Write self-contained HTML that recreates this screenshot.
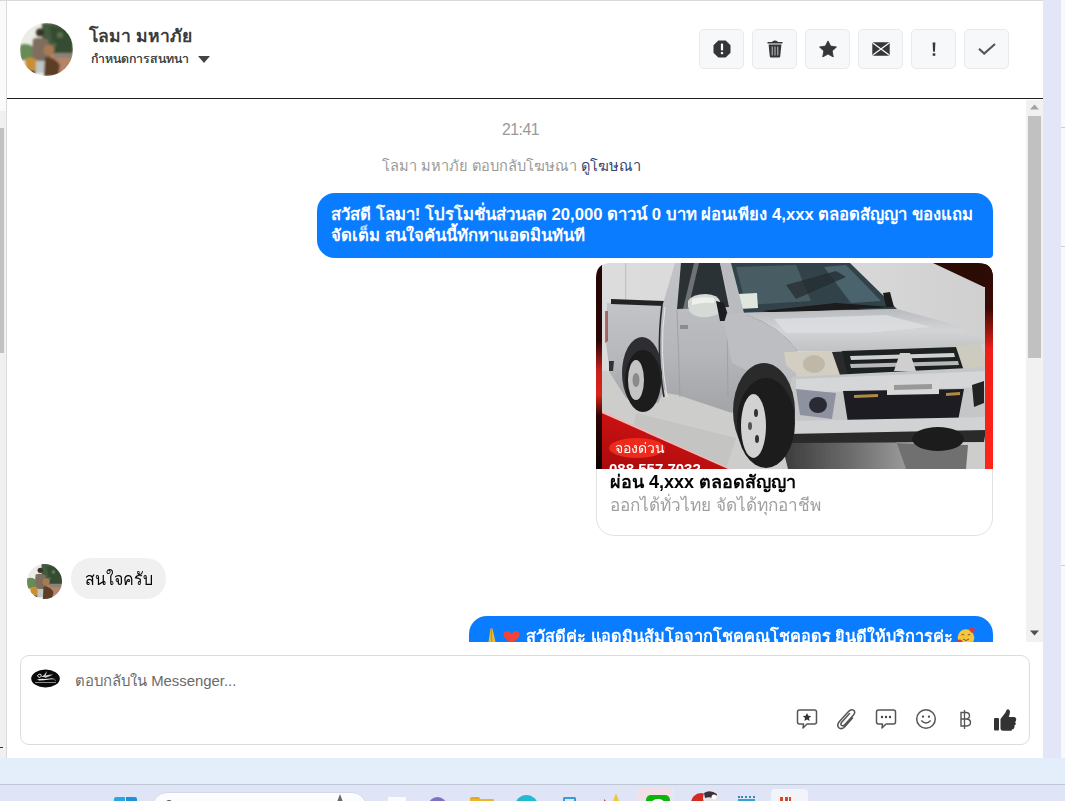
<!DOCTYPE html>
<html><head><meta charset="utf-8">
<style>
*{box-sizing:border-box;margin:0;padding:0}
html,body{width:1065px;height:801px;overflow:hidden;background:#fff;font-family:"Liberation Sans",sans-serif}
.abs{position:absolute}
#leftstrip{left:0;top:0;width:6px;height:758px;background:#f0f0f0}
#leftstrip .top{position:absolute;left:0;top:0;width:6px;height:111px;background:#fafafa}
#leftstrip .thumb{position:absolute;left:0;top:128px;width:4px;height:225px;background:#c1c1c1}
#leftline{left:6px;top:0;width:1px;height:758px;background:#dadada}
#topline{left:0;top:0;width:1043px;height:1px;background:#d9d9d9}
#panel{left:7px;top:1px;width:1036px;height:757px;background:#fff}
#rightstrip{left:1043px;top:0;width:18px;height:758px;background:#e3e6f7}
#rightedge{left:1061px;top:0;width:4px;height:758px;background:#f8f9fc}
#band{left:0;top:758px;width:1065px;height:26px;background:#e4edfa}
#tbline{left:0;top:784px;width:1065px;height:1px;background:#bdc7d3}
#taskbar{left:0;top:785px;width:1065px;height:16px;background:#dfe5f6}
.avatar{border-radius:50%;overflow:hidden}
#hdrline{left:7px;top:98px;width:1036px;height:1px;background:#1e1e1e}
.btn{top:29px;width:45px;height:40px;background:#f7f8fa;border:1px solid #e9eaec;border-radius:5px}
.btn svg{position:absolute;left:50%;top:50%;transform:translate(-50%,-50%)}
#name{left:89px;top:24px;font-size:17.5px;font-weight:bold;color:#3a3a3a;white-space:nowrap;line-height:24px}
#sub{left:91px;top:50px;font-size:12.3px;color:#454545;text-shadow:0.4px 0 0 #454545;white-space:nowrap;line-height:18px}
#vtrack{left:1026px;top:100px;width:17px;height:542px;background:#f1f1f1}
#vthumb{left:1028px;top:116px;width:13px;height:242px;background:#c1c1c1}
#time{left:502px;top:121px;font-size:15.8px;letter-spacing:-0.5px;color:#9a9a9a;line-height:18px;white-space:nowrap}
#reply{left:382px;top:157px;font-size:14.6px;color:#9a9a9a;line-height:18px;white-space:nowrap}
#reply b{color:#34466e;font-weight:normal}
#bub1{left:317px;top:193px;width:676px;height:65px;background:#0a7cff;border-radius:18px 18px 4px 18px}
.btxt{color:#fff;font-weight:bold;font-size:16.7px;white-space:nowrap;line-height:21px}
#card{left:596px;top:263px;width:397px;height:273px;border:1px solid #e2e2e2;border-radius:18px 16px 18px 18px;overflow:hidden;background:#fff}
#cardtitle{left:610px;top:471px;font-size:18px;font-weight:bold;color:#050505;line-height:22px;white-space:nowrap}
#cardsub{left:610px;top:494px;font-size:17.2px;color:#a0a0a0;line-height:22px;white-space:nowrap}
#bub2{left:71px;top:558px;width:95px;height:41px;background:#f0f0f0;border-radius:20px}
#bub2txt{left:85px;top:569px;font-size:17.5px;transform:scaleX(0.914);transform-origin:0 0;color:#050505;line-height:20px;white-space:nowrap}
#bub3clip{left:7px;top:99px;width:1019px;height:543px;overflow:hidden}
#composer{left:20px;top:655px;width:1010px;height:90px;border:1px solid #dcdcdc;border-radius:9px}
#ph{left:75px;top:672px;font-size:14.9px;color:#6a6a6a;line-height:18px;white-space:nowrap}
</style></head><body>
<div id="leftstrip" class="abs"><div class="top"></div><div class="thumb"></div></div>
<div id="leftline" class="abs"></div>
<div id="panel" class="abs"></div>
<div id="topline" class="abs"></div>
<div id="rightstrip" class="abs"></div>
<div id="rightedge" class="abs"></div>
<div class="abs" style="left:1061px;top:127px;width:4px;height:1px;background:#cfcfcf"></div>
<div class="abs" style="left:1061px;top:246px;width:4px;height:1px;background:#cfcfcf"></div>
<div class="abs" style="left:1061px;top:565px;width:4px;height:1px;background:#cfcfcf"></div>
<div class="abs" style="left:0px;top:747px;width:3px;height:1px;background:#333"></div>
<div id="band" class="abs"></div>
<div id="tbline" class="abs"></div>
<div id="taskbar" class="abs"></div>

<!-- header -->
<svg class="abs" style="left:20px;top:23px" width="53" height="53" viewBox="0 0 53 53"><defs><clipPath id="aca"><circle cx="26.5" cy="26.5" r="26.5"/></clipPath><filter id="afa" x="-10%" y="-10%" width="120%" height="120%"><feGaussianBlur stdDeviation="1.2"/></filter></defs><g clip-path="url(#aca)"><rect width="53" height="53" fill="#ecece6"/><g filter="url(#afa)"><path d="M22 0 H53 V34 H22Z" fill="#435a3c"/><path d="M30 4 Q44 2 53 14 V30 H34Z" fill="#364c32"/><circle cx="40" cy="12" r="3" fill="#5a7050"/><circle cx="34" cy="22" r="2.5" fill="#50684a"/><path d="M0 22 Q8 19 13 24 L13 37 H0Z" fill="#688a56"/><path d="M27 31 H53 V53 H27Z" fill="#b68468"/><path d="M34 30 H53 V35 H34Z" fill="#8c8274"/><circle cx="20" cy="9.5" r="4" fill="#3a302a"/><path d="M13 16 Q20 13 28 17 L31 38 L27 48 L15 46 L12 30Z" fill="#7f6e5e"/><circle cx="29" cy="27" r="5.5" fill="#a87a52"/><path d="M5 36 Q11 32 18 38 L17 48 L6 46Z" fill="#c89034"/><path d="M16 38 H27 L26 50 H16Z" fill="#bec6c6"/><path d="M25 34 Q34 33 40 42 L38 53 H24Z" fill="#5c3e26"/><path d="M4 46 L16 48 L14 53 H4Z" fill="#4a3424"/></g></g></g></svg>
<div id="name" class="abs">โลมา มหาภัย</div>
<div id="sub" class="abs">กำหนดการสนทนา</div>
<svg class="abs" style="left:198px;top:56px" width="12" height="7" viewBox="0 0 12 7"><path d="M0 0H12L6 7Z" fill="#444"/></svg>

<div class="abs btn" style="left:699px"><svg width="18" height="18" viewBox="0 0 18 18"><path d="M5.3 0.5H12.7L17.5 5.3V12.7L12.7 17.5H5.3L0.5 12.7V5.3Z" fill="#363636"/><rect x="7.9" y="3.6" width="2.2" height="7" rx="0.8" fill="#fff"/><rect x="7.9" y="12" width="2.2" height="2.2" rx="0.6" fill="#fff"/></svg></div>
<div class="abs btn" style="left:752px"><svg width="16" height="18" viewBox="0 0 16 18"><path d="M5.5 1.2 Q8 0 10.5 1.2 L10.5 2 H15.5 V3.6 H0.5 V2 H5.5Z" fill="#363636"/><path d="M1.6 4.6 H14.4 L13.2 16.6 Q13 17.6 12 17.6 H4 Q3 17.6 2.8 16.6Z" fill="#363636"/><rect x="4.6" y="6.5" width="1.4" height="9" fill="#9a9a9a"/><rect x="7.3" y="6.5" width="1.4" height="9" fill="#9a9a9a"/><rect x="10" y="6.5" width="1.4" height="9" fill="#9a9a9a"/></svg></div>
<div class="abs btn" style="left:805px"><svg width="18" height="17" viewBox="0 0 18 17"><path d="M9 0.3 L11.6 5.6 L17.5 6.4 L13.2 10.5 L14.3 16.5 L9 13.6 L3.7 16.5 L4.8 10.5 L0.5 6.4 L6.4 5.6Z" fill="#363636" stroke="#363636" stroke-width="0.8" stroke-linejoin="round"/></svg></div>
<div class="abs btn" style="left:858px"><svg width="18" height="14" viewBox="0 0 18 14"><rect x="0.3" y="0.3" width="17.4" height="13.4" rx="1.8" fill="#363636"/><path d="M1.2 1.2 L16.8 12.8 M16.8 1.2 L1.2 12.8" stroke="#f7f8fa" stroke-width="1.3"/></svg></div>
<div class="abs btn" style="left:911px"><svg width="6" height="14" viewBox="0 0 6 14"><path d="M1.6 0.5 H4.4 L3.9 9.8 H2.1Z" fill="#363636"/><rect x="1.7" y="11.3" width="2.6" height="2.5" fill="#363636"/></svg></div>
<div class="abs btn" style="left:964px"><svg width="18" height="12" viewBox="0 0 18 12"><path d="M1 5.8 L6.2 10.6 L17 1" fill="none" stroke="#555" stroke-width="2.1"/></svg></div>

<div id="hdrline" class="abs"></div>

<!-- chat -->
<div id="vtrack" class="abs"></div>
<div id="vthumb" class="abs"></div>
<svg class="abs" style="left:1030px;top:104px" width="9" height="6" viewBox="0 0 9 6"><path d="M0 5.5 L4.5 0.5 L9 5.5Z" fill="#a3a3a3"/></svg>
<svg class="abs" style="left:1030px;top:630px" width="9" height="6" viewBox="0 0 9 6"><path d="M0 0.5 L4.5 5.5 L9 0.5Z" fill="#505050"/></svg>
<div id="time" class="abs">21:41</div>
<div id="reply" class="abs">โลมา มหาภัย ตอบกลับโฆษณา <b>ดูโฆษณา</b></div>
<div id="bub1" class="abs"></div>
<div class="abs btxt" style="left:331px;top:204px">สวัสดี โลมา! โปรโมชั่นส่วนลด 20,000 ดาวน์ 0 บาท ผ่อนเพียง 4,xxx ตลอดสัญญา ของแถม</div>
<div class="abs btxt" style="left:331px;top:225px">จัดเต็ม สนใจคันนี้ทักหาแอดมินทันที</div>
<div id="card" class="abs"></div>
<svg class="abs" style="left:596px;top:263px" width="397" height="206" viewBox="0 0 397 206">
<defs>
<linearGradient id="lstripe" x1="0" y1="0" x2="0" y2="1"><stop offset="0" stop-color="#230605"/><stop offset="0.38" stop-color="#2a0605"/><stop offset="0.52" stop-color="#c8201a"/><stop offset="0.64" stop-color="#d82418"/><stop offset="0.74" stop-color="#300604"/><stop offset="1" stop-color="#0a0202"/></linearGradient>
<linearGradient id="rstripe" x1="0" y1="0" x2="0" y2="1"><stop offset="0" stop-color="#2b0c05"/><stop offset="0.22" stop-color="#3a0a05"/><stop offset="0.42" stop-color="#f01e18"/><stop offset="1" stop-color="#ff2418"/></linearGradient>
<linearGradient id="wall" x1="0" y1="0" x2="1" y2="0"><stop offset="0" stop-color="#dcdcdc"/><stop offset="0.6" stop-color="#d9d9d9"/><stop offset="1" stop-color="#cfcfcf"/></linearGradient>
<linearGradient id="body" x1="0" y1="0" x2="0" y2="1"><stop offset="0" stop-color="#c2c4c8"/><stop offset="0.6" stop-color="#b4b6ba"/><stop offset="1" stop-color="#a2a4a8"/></linearGradient>
<linearGradient id="hood" x1="0" y1="0" x2="0" y2="1"><stop offset="0" stop-color="#b8babe"/><stop offset="0.5" stop-color="#d2d4d6"/><stop offset="1" stop-color="#c0c2c4"/></linearGradient>
<linearGradient id="refl" x1="0" y1="0" x2="1" y2="0"><stop offset="0" stop-color="#3a3a3a"/><stop offset="0.6" stop-color="#707070"/><stop offset="1" stop-color="#9a9a9a"/></linearGradient>
<linearGradient id="tri" x1="0" y1="1" x2="0.6" y2="0"><stop offset="0" stop-color="#a80a0c"/><stop offset="1" stop-color="#d81414"/></linearGradient>
<clipPath id="cclip"><path d="M0 206 V15 Q0 0 15 0 H382 Q397 0 397 15 V206Z"/></clipPath>
<filter id="soft" x="0" y="0" width="100%" height="100%"><feGaussianBlur stdDeviation="0.7"/></filter>
</defs>
<g clip-path="url(#cclip)">
<rect width="397" height="206" fill="url(#wall)"/>
<path d="M0 108 L397 98 L397 206 L0 206Z" fill="#cdcdcb"/>
<rect x="29" y="0" width="1.2" height="108" fill="#c2c2c2"/>
<g filter="url(#soft)">
<!-- floor reflections -->
<path d="M40 150 L140 175 L130 206 L30 206Z" fill="#c4c4c2"/>
<path d="M300 180 L372 182 L370 206 L308 206Z" fill="#4a4a4a" opacity="0.7"/>
<path d="M185 178 L300 178 L310 206 L192 206Z" fill="url(#refl)"/>
<!-- rear bed -->
<path d="M11 40 L68 40 L74 60 L72 120 L62 140 L30 135 L14 110 L10 80Z" fill="url(#body)"/>
<path d="M15 36 L68 38 L68 43 L15 41Z" fill="#222"/>
<path d="M9 48 L12 48 L12 78 L9 80Z" fill="#9a3a3a" opacity="0.7"/>
<path d="M13 98 L18 98 L17 108 L13 108Z" fill="#333"/>
<!-- rear wheel arch and wheel -->
<ellipse cx="46" cy="110" rx="20" ry="36" fill="#2e2e30"/>
<ellipse cx="47" cy="118" rx="18" ry="31" fill="#1c1c1c"/>
<ellipse cx="40" cy="117" rx="8" ry="20" fill="#c4c4c4"/>
<ellipse cx="40" cy="117" rx="3.5" ry="7" fill="#8a8a8a"/>
<!-- cab side -->
<path d="M66 44 L79 0 L140 0 L146 50 L180 60 L178 130 L150 120 L136 150 L82 132 L70 130 L64 100Z" fill="url(#body)"/>
<path d="M66 42 Q60 90 68 134" fill="none" stroke="#2a2a2a" stroke-width="1.6"/>
<path d="M69 44 Q63 90 71 134" fill="none" stroke="#e6e6e8" stroke-width="1"/>
<path d="M85 0 L124 0 L133 44 L81 46 Z" fill="#2c3134"/>
<path d="M98 0 L103 0 L92 46 L87 46Z" fill="#8a8e92" opacity="0.7"/>
<path d="M81 46 L84 134" stroke="#9a9ca0" stroke-width="0.8"/>
<path d="M131 55 L132 134" stroke="#9a9ca0" stroke-width="0.8"/>
<path d="M92 38 Q96 31 110 31 Q122 32 124 38 L124 50 Q116 55 104 54 Q93 52 92 44Z" fill="#d6dad6"/>
<path d="M96 36 Q106 33 118 35 L118 40 Q106 39 96 42Z" fill="#eef0ee"/>
<path d="M120 38 L128 40 L134 58 L124 58Z" fill="#1c1e22"/>
<path d="M84 62 L92 62 L92 66 L84 66Z" fill="#8a8c90"/>
<!-- windshield -->
<path d="M130 0 L254 0 L301 46 L146 50 Z" fill="#33434a"/>
<path d="M140 4 L200 2 L215 38 L150 42Z" fill="#4f666c" opacity="0.75"/>
<path d="M228 4 L250 2 L285 38 L255 40Z" fill="#56707a" opacity="0.7"/>
<path d="M190 22 L240 8 L250 14 L200 36Z" fill="#22282c" opacity="0.7"/>
<path d="M142 31 L161 30 L162 45 L143 46Z" fill="#dfe6de"/>
<path d="M166 48 L240 40 L296 44 L180 50Z" fill="#1a1a1a"/>
<path d="M287 30 L294 29 L298 44 L290 44Z" fill="#1e1e1e"/>
<path d="M124 0 L135 0 L148 50 L137 50Z" fill="#b9bbbf"/>
<!-- hood -->
<path d="M137 50 L301 46 L360 62 L392 80 L362 86 L254 88 L201 88 L170 72 L150 52Z" fill="url(#hood)"/>
<path d="M178 56 L290 52 L335 64 L270 70 L190 70Z" fill="#dcdee0" opacity="0.85"/>
<path d="M150 52 Q185 64 201 88" fill="none" stroke="#8a8c90" stroke-width="0.8"/>
<!-- front fender -->
<path d="M131 50 L150 52 Q185 64 201 88 L200 120 L190 176 L172 178 L160 112 L136 100 L128 60Z" fill="#bcbec2"/>
<!-- headlights -->
<path d="M188 89 L238 88 L246 112 L204 114 L190 102Z" fill="#d2cec2"/>
<ellipse cx="218" cy="101" rx="11" ry="9" fill="#bfb8a8"/>
<path d="M236 89 L254 88 L254 112 L244 112Z" fill="#2a2a2a"/>
<path d="M352 84 L384 80 L392 104 L364 108Z" fill="#cdcac0"/>
<!-- grille -->
<path d="M246 88 L360 84 L368 108 L252 114Z" fill="#1e2124"/>
<path d="M254 93 L358 90 L359 94 L255 97Z" fill="#d0d0d0"/>
<path d="M254 101 L362 98 L363 102 L255 105Z" fill="#b8b8b8"/>
<path d="M304 90 L314 90 L320 108 L298 108Z" fill="#cfcfcf"/>
<!-- bumper -->
<path d="M196 114 L392 104 L396 140 L392 172 L196 176 L188 150Z" fill="#c4c6c8"/>
<path d="M200 116 L392 108 L392 124 L200 130Z" fill="#d4d6d8"/>
<!-- lower grille -->
<path d="M247 128 L368 126 L362 158 L252 160Z" fill="#1b1d20"/>
<path d="M258 132 L282 131 L282 134 L258 135Z" fill="#b08a40"/>
<path d="M350 130 L364 129 L364 132 L350 133Z" fill="#b08a40"/>
<!-- fog light -->
<path d="M200 126 L240 130 L236 156 L204 152Z" fill="#8e92a0"/>
<ellipse cx="222" cy="142" rx="9" ry="8" fill="#2a2c30"/>
<path d="M376 122 L388 118 L388 140 L378 144Z" fill="#222"/>
<!-- plate -->
<path d="M291 118 L343 117 L343 131 L291 132Z" fill="#d8d8d8"/>
<path d="M298 122 L336 121 L336 126 L298 127Z" fill="#999"/>
<!-- under -->
<path d="M190 158 L392 154 L390 168 L192 172Z" fill="#d0d2d4"/>
<path d="M190 171 L390 167 L388 179 L194 180Z" fill="#2c2c2c"/>
<ellipse cx="342" cy="176" rx="26" ry="12" fill="#1e1e1e"/>
<!-- front wheel -->
<ellipse cx="168" cy="148" rx="31" ry="48" fill="#2a2a2c"/>
<ellipse cx="170" cy="160" rx="29" ry="45" fill="#1c1c1c"/>
<ellipse cx="157.5" cy="163" rx="12.5" ry="32" fill="#d2d2d2"/>
<ellipse cx="160" cy="150" rx="2" ry="4" fill="#333"/><ellipse cx="161" cy="176" rx="2" ry="4" fill="#333"/><ellipse cx="154" cy="163" rx="2" ry="4" fill="#555"/>
</g>
<!-- red triangle -->
<path d="M0 146 L133 206 L0 206Z" fill="url(#tri)"/>
<path d="M0 145 L135 206 L132 206 L0 147.5Z" fill="#f0b8b8"/>
<rect x="0" y="0" width="6" height="206" fill="url(#lstripe)"/>
<path d="M337 0 L397 0 L397 24 L388 24Z" fill="#2b0c05"/>
<rect x="389" y="0" width="8" height="206" fill="url(#rstripe)"/>
<ellipse cx="41" cy="185" rx="28" ry="10" fill="#ee2a1c"/>
<text x="18.5" y="190" font-family="Liberation Sans" font-size="14" fill="#fff">จองด่วน</text>
<text x="13" y="211" font-family="Liberation Sans" font-size="15" font-weight="bold" fill="#fff">088 557 7032</text>
</g>
</svg>
<div id="cardtitle" class="abs">ผ่อน 4,xxx ตลอดสัญญา</div>
<div id="cardsub" class="abs">ออกได้ทั่วไทย จัดได้ทุกอาชีพ</div>
<svg class="abs" style="left:27px;top:564px" width="35" height="35" viewBox="0 0 53 53"><defs><clipPath id="acb"><circle cx="26.5" cy="26.5" r="26.5"/></clipPath><filter id="afb" x="-10%" y="-10%" width="120%" height="120%"><feGaussianBlur stdDeviation="1.2"/></filter></defs><g clip-path="url(#acb)"><rect width="53" height="53" fill="#ecece6"/><g filter="url(#afb)"><path d="M22 0 H53 V34 H22Z" fill="#435a3c"/><path d="M30 4 Q44 2 53 14 V30 H34Z" fill="#364c32"/><circle cx="40" cy="12" r="3" fill="#5a7050"/><circle cx="34" cy="22" r="2.5" fill="#50684a"/><path d="M0 22 Q8 19 13 24 L13 37 H0Z" fill="#688a56"/><path d="M27 31 H53 V53 H27Z" fill="#b68468"/><path d="M34 30 H53 V35 H34Z" fill="#8c8274"/><circle cx="20" cy="9.5" r="4" fill="#3a302a"/><path d="M13 16 Q20 13 28 17 L31 38 L27 48 L15 46 L12 30Z" fill="#7f6e5e"/><circle cx="29" cy="27" r="5.5" fill="#a87a52"/><path d="M5 36 Q11 32 18 38 L17 48 L6 46Z" fill="#c89034"/><path d="M16 38 H27 L26 50 H16Z" fill="#bec6c6"/><path d="M25 34 Q34 33 40 42 L38 53 H24Z" fill="#5c3e26"/><path d="M4 46 L16 48 L14 53 H4Z" fill="#4a3424"/></g></g></g></svg>
<div id="bub2" class="abs"></div>
<div id="bub2txt" class="abs">สนใจครับ</div>

<div id="bub3clip" class="abs"><div class="abs" style="left:462px;top:517px;width:524px;height:60px;background:#0a7cff;border-radius:18px"></div>
<svg class="abs" style="left:478px;top:527px" width="44" height="20" viewBox="0 0 44 20"><path d="M5.5 2.5 L7.5 2.5 L10.5 16 L3.5 16Z" fill="#e8b830"/><path d="M6.5 3 L6.5 16" stroke="#c08a20" stroke-width="0.8"/><path d="M26.5 18.5 L20 12 Q17.7 9.5 18.8 7 Q21 3.8 24.2 5.8 L26.5 7.6 L28.8 5.8 Q32 3.8 34.2 7 Q35.3 9.5 33 12Z" fill="#f0443a"/></svg>
<div class="abs btxt" style="left:519px;top:527px;font-size:16.3px">สวัสดีค่ะ แอดมินส้มโอจากโชคคูณโชคอุดร ยินดีให้บริการค่ะ</div>
<svg class="abs" style="left:946px;top:526px" width="40" height="20" viewBox="0 0 40 20"><circle cx="13" cy="12.5" r="8.3" fill="#f3c640"/><path d="M8.5 10 Q10 8.8 11.2 10" fill="none" stroke="#7a4a10" stroke-width="0.9"/><path d="M14.8 10 Q16 8.8 17.3 10" fill="none" stroke="#7a4a10" stroke-width="0.9"/><path d="M10 14 Q13 17 16 14" fill="none" stroke="#7a4a10" stroke-width="0.9"/><path d="M19 8 L16.5 5.5 Q15.5 4 16.8 3 Q18 2.4 19 3.6 Q20 2.4 21.2 3 Q22.5 4 21.5 5.5Z" fill="#e8323c"/><ellipse cx="6.5" cy="17" rx="3" ry="2.5" fill="#e8323c"/><circle cx="25.5" cy="18" r="1.2" fill="#fff"/></svg>
</div>
<div id="composer" class="abs"></div>
<svg class="abs" style="left:31px;top:669px" width="30" height="19" viewBox="0 0 30 19"><ellipse cx="14.5" cy="9.5" rx="14.3" ry="9" fill="#0a0a0a"/><path d="M6 10.5 Q10 9.5 14 10 L24 9 Q18 11 8 11.5Z" fill="#e8e8e8"/><path d="M6.5 6.5 Q8 4.5 10 5.5 Q11 7 9 8.5 Q7 8.5 6.5 6.5Z" fill="none" stroke="#ddd" stroke-width="1"/><path d="M10 8 Q14 6 16 2 Q15 6 14 8Z" fill="#d8d8d8"/><path d="M13 7 Q18 5 22 5.5 Q18 7.5 14 9Z" fill="#cfcfcf"/><path d="M4 13.5 H25" stroke="#9a9a9a" stroke-width="0.9"/><path d="M19 10 Q23 10 25 11.5" stroke="#aaa" stroke-width="0.6" fill="none"/></svg>
<svg class="abs" style="left:796px;top:708px" width="22" height="22" viewBox="0 0 22 22"><path d="M3.5 2 H18.5 Q20.5 2 20.5 4 V14 Q20.5 16 18.5 16 H11 L7 20 L7.5 16 H3.5 Q1.5 16 1.5 14 V4 Q1.5 2 3.5 2Z" fill="none" stroke="#555" stroke-width="1.5" stroke-linejoin="round"/><path d="M11 5 L12.3 7.8 L15.2 8.1 L13 10 L13.6 13 L11 11.5 L8.4 13 L9 10 L6.8 8.1 L9.7 7.8Z" fill="#333"/></svg>
<svg class="abs" style="left:835px;top:708px" width="23" height="22" viewBox="0 0 23 22"><path d="M14.5 5.5 L6.5 14.5 Q5 16.5 6.8 17.5 Q8.5 18.5 10 16.5 L18.5 7 Q21 4 18.5 2.2 Q16 0.8 13.5 3.5 L4 14 Q1.5 17.5 4 19.8 Q7 22 10 18.5 L17.5 10" fill="none" stroke="#555" stroke-width="1.5" stroke-linecap="round"/></svg>
<svg class="abs" style="left:875px;top:708px" width="22" height="22" viewBox="0 0 22 22"><path d="M3.5 2 H18.5 Q20.5 2 20.5 4 V14 Q20.5 16 18.5 16 H11 L7 20 L7.5 16 H3.5 Q1.5 16 1.5 14 V4 Q1.5 2 3.5 2Z" fill="none" stroke="#555" stroke-width="1.5" stroke-linejoin="round"/><circle cx="7" cy="9" r="1.2" fill="#444"/><circle cx="11" cy="9" r="1.2" fill="#444"/><circle cx="15" cy="9" r="1.2" fill="#444"/></svg>
<svg class="abs" style="left:915px;top:708px" width="22" height="22" viewBox="0 0 22 22"><circle cx="11" cy="11" r="9.3" fill="none" stroke="#555" stroke-width="1.5"/><circle cx="8" cy="8.7" r="1.1" fill="#444"/><circle cx="14" cy="8.7" r="1.1" fill="#444"/><path d="M6.3 12.5 Q11 17.5 15.7 12.5" fill="none" stroke="#555" stroke-width="1.4"/></svg>
<svg class="abs" style="left:958px;top:709px" width="14" height="21" viewBox="0 0 14 21"><path d="M3 3.5 H8 Q11.5 3.5 11.5 6.8 Q11.5 9.8 8 10 Q12.5 10 12.5 13.6 Q12.5 17 8.5 17 H3Z M3 10 H8" fill="none" stroke="#555" stroke-width="1.4"/><path d="M6.5 1 V20" stroke="#555" stroke-width="1.3"/></svg>
<svg class="abs" style="left:993px;top:708px" width="24" height="23" viewBox="0 0 24 23"><rect x="1" y="10" width="5" height="12.5" rx="1" fill="#333"/><path d="M7.5 11 L12.5 4.5 Q13.5 1 15 1.2 Q17.5 1.5 16.8 5.5 L15.8 9 H21 Q23.5 9.3 23.2 12 Q23 13.5 22 14 Q23.3 15 22.6 16.6 Q22 17.6 21.2 17.8 Q22 19 21 20.4 Q20.2 21.3 19 21.3 Q19.5 22.8 17.5 22.8 H10 Q7.5 22.8 7.5 20.5Z" fill="#333"/></svg>
<div id="ph" class="abs">ตอบกลับใน Messenger...</div>
<div class="abs" style="left:114px;top:797px;width:11px;height:11px;background:#2aa6e2;border-radius:2px 0 0 0"></div>
<div class="abs" style="left:126px;top:797px;width:11px;height:11px;background:#1f92d6;border-radius:0 2px 0 0"></div>
<div class="abs" style="left:152px;top:792px;width:215px;height:30px;border-radius:15px;background:#fbfcfe;border:1px solid #d4d8e4"></div>
<div class="abs" style="left:164px;top:800px;width:10px;height:10px;border:1.5px solid #555;border-radius:50%"></div>
<svg class="abs" style="left:336px;top:794px" width="8" height="8" viewBox="0 0 8 8"><path d="M4 0 L7 8 H1Z" fill="#6a6a6a"/></svg>
<div class="abs" style="left:388px;top:797px;width:18px;height:10px;background:#fbfbfd"></div>
<div class="abs" style="left:428px;top:797px;width:19px;height:19px;border-radius:50%;background:#7c72c2"></div>
<div class="abs" style="left:470px;top:797px;width:10px;height:4px;background:#e4a81e;border-radius:2px 2px 0 0"></div><div class="abs" style="left:470px;top:799px;width:24px;height:10px;background:#ebb42a;border-radius:1px"></div>
<div class="abs" style="left:515px;top:795px;width:23px;height:23px;border-radius:50%;background:linear-gradient(90deg,#2bb3c8,#1fc0d8)"></div>
<div class="abs" style="left:563px;top:797px;width:13px;height:10px;border:2px solid #3c9ad8;border-bottom:none;border-radius:2px 2px 0 0"></div>
<svg class="abs" style="left:602px;top:793px" width="22" height="10" viewBox="0 0 22 10"><path d="M14 0 L17 8 L21 10 H6 L11 8Z" fill="#f2c83a"/><path d="M2 6 L6 10 H2Z" fill="#d04a3a"/></svg>
<div class="abs" style="left:638px;top:788px;width:34px;height:20px;background:#f1e0e8;border-radius:4px"></div>
<div class="abs" style="left:646px;top:795px;width:24px;height:10px;background:#0bb60b;border-radius:5px 5px 0 0"></div><div class="abs" style="left:651px;top:799px;width:14px;height:6px;background:#fff;border-radius:7px 7px 0 0"></div>
<div class="abs" style="left:672px;top:788px;width:2px;height:13px;background:#e4e8f4"></div>
<svg class="abs" style="left:690px;top:790px" width="30" height="11" viewBox="0 0 30 11"><circle cx="11" cy="13" r="10" fill="#d42a24"/><circle cx="21" cy="8" r="8" fill="#e4e4e8"/><path d="M14 3 Q20 -1 27 4 L25 9 Q20 6 15 8Z" fill="#3a3038"/><circle cx="24" cy="7" r="2.5" fill="#fff"/></svg>
<div class="abs" style="left:738px;top:796px;width:17px;height:2px;border-top:2px dotted #2a8ab8"></div><div class="abs" style="left:738px;top:799px;width:17px;height:8px;background:#3aa2d0"></div>
<div class="abs" style="left:771px;top:789px;width:37px;height:20px;background:#f3f4fa;border-radius:4px"></div>
<div class="abs" style="left:780px;top:797px;width:3px;height:6px;background:#d84a20"></div>
<div class="abs" style="left:785px;top:797px;width:3px;height:6px;background:#d84a20"></div>
<div class="abs" style="left:789px;top:797px;width:2px;height:6px;background:#d84a20"></div>
</body></html>
